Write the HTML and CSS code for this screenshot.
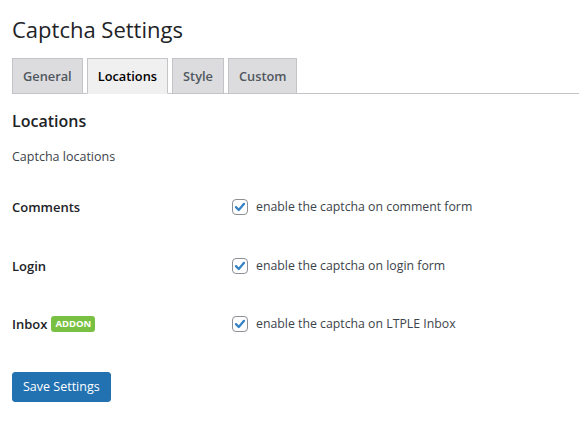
FILE: index.html
```html
<!DOCTYPE html>
<html>
<head>
<meta charset="utf-8">
<link rel="stylesheet" href="styles.css">
</head>
<body>
<div class="wrap">
  <h1 class="title">Captcha Settings</h1>
  <nav class="tabs">
    <a class="tab">General</a>
    <a class="tab active">Locations</a>
    <a class="tab">Style</a>
    <a class="tab">Custom</a>
  </nav>
  <h2 class="section">Locations</h2>
  <p class="desc">Captcha locations</p>
  <div class="form">
    <div class="row">
      <div class="th">Comments</div>
      <div class="td"><label class="check"><span class="box"><svg viewBox="0 0 16 16" width="16" height="16"><path d="M3.4 8.2 L6.6 11.4 L12.6 4.4" fill="none" stroke="#3582c4" stroke-width="2.6" stroke-linecap="round" stroke-linejoin="round"/></svg></span>enable the captcha on comment form</label></div>
    </div>
    <div class="row">
      <div class="th">Login</div>
      <div class="td"><label class="check"><span class="box"><svg viewBox="0 0 16 16" width="16" height="16"><path d="M3.4 8.2 L6.6 11.4 L12.6 4.4" fill="none" stroke="#3582c4" stroke-width="2.6" stroke-linecap="round" stroke-linejoin="round"/></svg></span>enable the captcha on login form</label></div>
    </div>
    <div class="row">
      <div class="th">Inbox <span class="badge">ADDON</span></div>
      <div class="td"><label class="check"><span class="box"><svg viewBox="0 0 16 16" width="16" height="16"><path d="M3.4 8.2 L6.6 11.4 L12.6 4.4" fill="none" stroke="#3582c4" stroke-width="2.6" stroke-linecap="round" stroke-linejoin="round"/></svg></span>enable the captcha on LTPLE Inbox</label></div>
    </div>
  </div>
  <div class="submit"><button class="btn">Save Settings</button></div>
</div>
</body>
</html>
```

FILE: styles.css
```css
html, body {
  margin: 0;
  padding: 0;
  background: #fff;
}
body {
  font-family: "Open Sans", "Noto Sans", sans-serif;
  color: #1d2327;
  font-size: 13px;
}
.wrap {
  padding: 0 1px 0 12px;
}
.title {
  font-size: 22px;
  font-weight: 400;
  line-height: 29px;
  margin: 0;
  padding: 15px 0 14px;
  color: #1d2327;
}
.tabs {
  display: flex;
  gap: 4px;
  border-bottom: 1px solid #c3c4c7;
}
.tab {
  display: block;
  border: 1px solid #c3c4c7;
  border-bottom: none;
  background: #dcdcde;
  color: #50575e;
  font-size: 12.8px;
  font-weight: 600;
  line-height: 24px;
  padding: 5px 10px;
}
.tab.active {
  background: #f0f0f1;
  color: #000;
  margin-bottom: -1px;
  border-bottom: 1px solid #f0f0f1;
}
.section {
  font-size: 16px;
  font-weight: 600;
  line-height: 22px;
  margin: 16px 0 0;
  color: #1d2327;
}
.desc {
  margin: 16px 0 0;
  font-size: 12.5px;
  line-height: 18px;
  color: #3c434a;
}
.form {
  margin-top: 12px;
  display: flex;
  flex-direction: column;
}
.row {
  display: flex;
  align-items: flex-start;
  height: 58.5px;
}
.th {
  width: 200px;
  padding: 20px 10px 0 0;
  font-size: 13px;
  font-weight: 600;
  line-height: 18px;
  color: #1d2327;
  display: flex;
  align-items: center;
}
.td {
  padding: 20px 10px 0;
}
.check {
  display: flex;
  align-items: center;
  font-size: 12.3px;
  line-height: 18px;
  color: #3c434a;
}
.box {
  width: 14px;
  height: 14px;
  border: 1px solid #8c8f94;
  border-radius: 4px;
  margin-right: 8px;
  display: flex;
  align-items: center;
  justify-content: center;
  background: #fff;
}
.box svg {
  width: 14px;
  height: 14px;
}
.badge {
  display: inline-block;
  margin-left: 4px;
  background: #7ac143;
  color: #fff;
  font-size: 9.5px;
  font-weight: 700;
  line-height: 16px;
  padding: 0 4px;
  border-radius: 3px;
}
.submit {
  margin-top: 18px;
}
.btn {
  font-family: inherit;
  font-size: 12.5px;
  line-height: 28px;
  padding: 0 10px;
  min-height: 30px;
  background: #2271b1;
  border: 1px solid #2271b1;
  color: #fff;
  border-radius: 3px;
  cursor: pointer;
}
```
